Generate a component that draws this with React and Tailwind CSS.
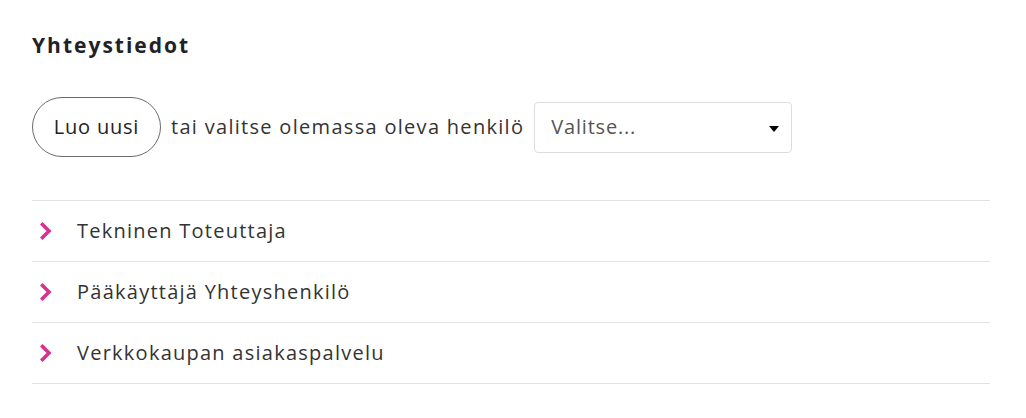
import React from "react";

const contacts = [
  "Tekninen Toteuttaja",
  "Pääkäyttäjä Yhteyshenkilö",
  "Verkkokaupan asiakaspalvelu",
];

const Chevron = () => (
  <svg width="12" height="18" viewBox="0 0 12 18" className="shrink-0">
    <path d="M2.5 2.5 L9 9 L2.5 15.5" fill="none" stroke="#d6338f" strokeWidth="3.6" strokeLinecap="square" strokeLinejoin="miter" />
  </svg>
);

export default function App() {
  return (
    <div
      className="min-h-screen bg-white px-8 pt-[30px] text-[#2b2b2b]"
      style={{ fontFamily: '"Open Sans", "Liberation Sans", sans-serif' }}
    >
      <h2 className="text-[21px] font-bold leading-[30px] tracking-[2px] text-[#222128]">Yhteystiedot</h2>

      <div className="mt-[37px] flex items-center">
        <button className="h-[60px] w-[129px] rounded-full border border-[#6b6b6b] text-[20px] tracking-[0.8px] text-[#222]">
          Luo uusi
        </button>
        <span className="ml-[10px] text-[20px] tracking-[1.3px] text-[#333]">tai valitse olemassa oleva henkilö</span>
        <div className="ml-[10px] flex h-[51px] w-[258px] items-center justify-between rounded border border-[#ddd] pl-[16px] pr-[12px]">
          <span className="text-[20px] tracking-[0.8px] text-[#555]">Valitse...</span>
          <span className="mt-[4px] h-0 w-0 border-x-[5px] border-t-[6px] border-x-transparent border-t-black" />
        </div>
      </div>

      <div className="mt-[43px] w-[958px] border-t border-[#e2e2e2]">
        {contacts.map((c) => (
          <div key={c} className="flex h-[61px] items-center border-b border-[#e2e2e2] pl-[8px]">
            <Chevron />
            <span className="ml-[25px] text-[20px] tracking-[1.25px] text-[#333]">{c}</span>
          </div>
        ))}
      </div>
    </div>
  );
}
